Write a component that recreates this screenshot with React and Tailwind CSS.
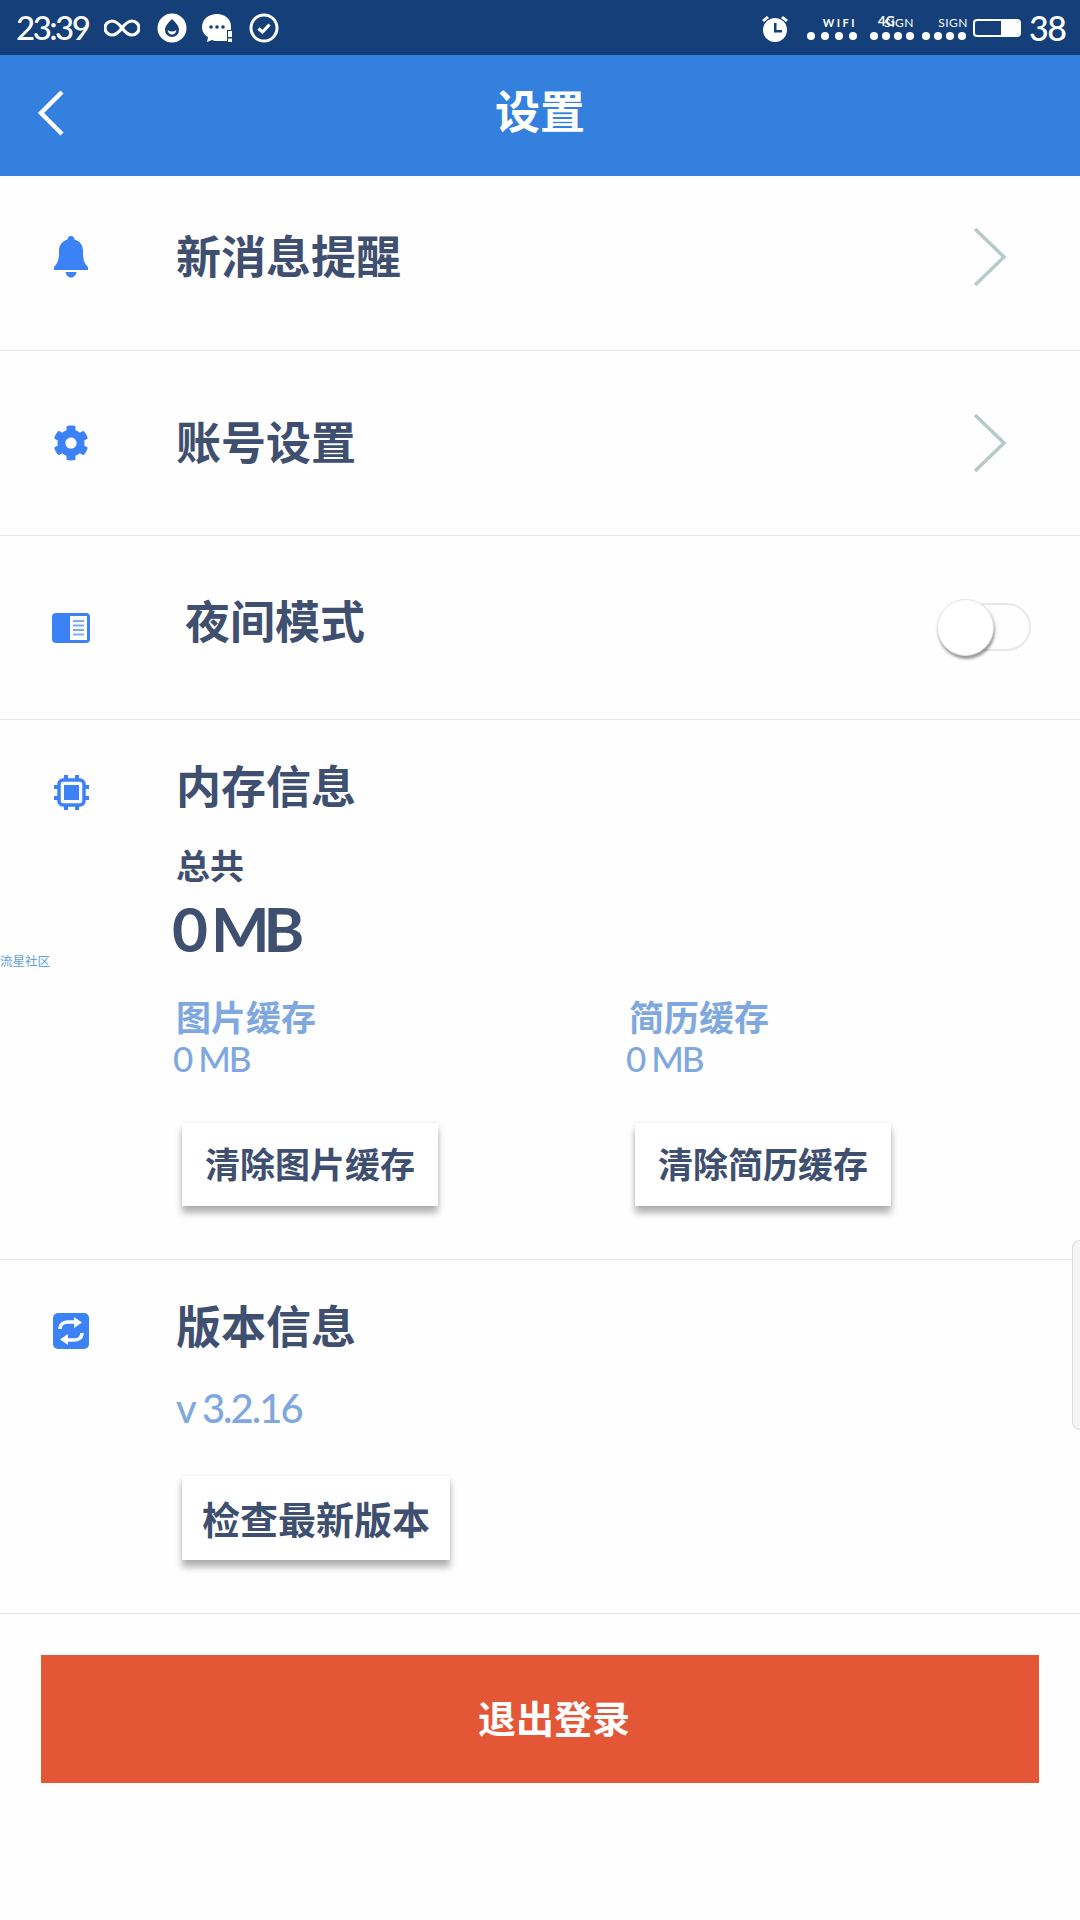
import { FaCog } from 'react-icons/fa';

const CJK = 'font-["Noto_Sans_CJK_SC",sans-serif]';
const LATIN = 'font-["Lato","Noto_Sans_CJK_SC",sans-serif]';

function Dots({ gap }) {
  return (
    <div className={`flex ${gap}`}>
      {[0, 1, 2, 3].map((i) => (
        <span key={i} className="size-2 rounded-full bg-white" />
      ))}
    </div>
  );
}

function StatusBar() {
  return (
    <div className={`flex h-[55px] items-center justify-between bg-[#143f78] pl-4 pr-[18px] text-white ${LATIN}`}>
      <div className="flex items-center">
        <span className="w-[88px] text-[33px] font-medium leading-none tracking-[-2.5px]">23:39</span>
        <svg width="36" height="20" viewBox="0 0 36 20" fill="none" stroke="white" strokeWidth="3.2">
          <path d="M18 10c-3-4-6-7-10-7a7 7 0 0 0 0 14c4 0 7-3 10-7s6-7 10-7a7 7 0 0 1 0 14c-4 0-7-3-10-7z" />
        </svg>
        <svg className="ml-[17px]" width="30" height="30" viewBox="0 0 30 30">
          <circle cx="15" cy="15" r="14.5" fill="white" />
          <path d="M15 6c4 4 7 7 7 11a7 7 0 0 1-14 0c0-4 3-7 7-11z" fill="#143f78" />
          <path d="M10.500 17c3 2 6 2 9 0-.5 3-2.500 4.500-4.500 4.500s-4-1.500-4.500-4.500z" fill="white" />
        </svg>
        <svg className="ml-[15px]" width="31" height="30" viewBox="0 0 31 30">
          <path d="M15 1c8 0 14 5 14 12v4h-4v11h-9c-2 0-4 0-6-1l-5 2 1-5c-4-2-6-6-6-10C0 6 7 1 15 1z" fill="white" />
          <circle cx="9" cy="14" r="1.800" fill="#143f78" />
          <circle cx="15" cy="14" r="1.800" fill="#143f78" />
          <circle cx="21" cy="14" r="1.800" fill="#143f78" />
          <path d="M26 18h4v6h-4zM26 25.500h4V29h-4z" fill="white" />
        </svg>
        <svg className="ml-[16px]" width="30" height="30" viewBox="0 0 30 30" fill="none" stroke="white">
          <circle cx="15" cy="15" r="13" strokeWidth="3" />
          <path d="M9.500 15.500l4 3.500 7-7.500" strokeWidth="3.200" />
        </svg>
      </div>
      <div className="flex items-center">
        <svg width="28" height="28" viewBox="0 0 28 28" fill="white">
          <circle cx="14" cy="16" r="12" />
          <path d="M1 6l5-4 2 2-5 4zM27 6l-5-4-2 2 5 4z" />
          <path d="M13 9h2.500v7H21v2.500h-8z" fill="#143f78" />
        </svg>
        <div className="ml-[18px] flex w-[50px] flex-col items-end">
          <span className="mb-[3px] text-[11px] font-bold leading-[13px] tracking-[2.5px]">WIFI</span>
          <Dots gap="gap-[6px]" />
        </div>
        <div className="relative ml-[13px] flex w-[44px] flex-col items-end">
          <span className="mb-[2px] text-[12px] leading-[14px] tracking-[0.5px]">SIGN</span>
          <span className="absolute left-2 top-[-2px] text-[13px] font-bold leading-[14px]">4G</span>
          <Dots gap="gap-[4px]" />
        </div>
        <div className="ml-[8px] flex w-[44px] flex-col items-end">
          <span className="mb-[2px] mr-[-2px] text-[12px] leading-[14px] tracking-[0.5px]">SIGN</span>
          <Dots gap="gap-[4px]" />
        </div>
        <div className="ml-[7px] flex h-[18px] w-[48px] justify-end overflow-hidden rounded-[4px] border-2 border-white">
          <div className="h-full w-[18px] bg-white" />
        </div>
        <span className="ml-2 w-[33px] text-[34px] font-medium leading-none tracking-[-1.5px]">38</span>
      </div>
    </div>
  );
}

function Header() {
  return (
    <div className={`grid h-[121px] grid-cols-[1fr_auto_1fr] items-center bg-[#3480de] text-white ${CJK}`}>
      <svg className="ml-[37px] mt-[-6px]" width="27" height="46" viewBox="0 0 27 46" fill="none" stroke="white" strokeWidth="4.500">
        <path d="M25 2L4 23l21 21" />
      </svg>
      <h1 className="mt-[-12px] text-[45px] font-bold leading-none">设置</h1>
      <span />
    </div>
  );
}

function BellIcon() {
  return (
    <svg width="34" height="42" viewBox="0 0 34 42" fill="#3b82f6">
      <path d="M17 0c2 0 3.500 1.500 3.500 3.500C26 5 29 9.500 29 15c0 6 0 11 5 16v3H0v-3c5-5 5-10 5-16C5 9.500 8 5 13.500 3.500 13.500 1.500 15 0 17 0z" />
      <path d="M11.500 36h11c-.5 3.500-3 5.500-5.500 5.500s-5-2-5.500-5.500z" />
    </svg>
  );
}

function BookIcon() {
  return (
    <svg width="38" height="30" viewBox="0 0 38 30">
      <rect width="38" height="30" rx="4" fill="#3b82f6" />
      <rect x="18" y="3" width="17" height="24" fill="white" />
      <path d="M21 8h11M21 12.500h11M21 17h11M21 21.500h11" stroke="#7fa9f5" strokeWidth="2" />
    </svg>
  );
}

function ChipIcon() {
  return (
    <svg width="35" height="35" viewBox="0 0 35 35" fill="none" stroke="#3b82f6">
      <rect x="5" y="5" width="25" height="25" rx="4" strokeWidth="3.500" />
      <rect x="10" y="10" width="15" height="15" fill="#3b82f6" strokeWidth="0" />
      <path d="M12 0v4M23 0v4M12 31v4M23 31v4M0 12h4M0 23h4M31 12h4M31 23h4" strokeWidth="4" />
    </svg>
  );
}

function SyncIcon() {
  return (
    <svg width="36" height="36" viewBox="0 0 36 36">
      <rect width="36" height="36" rx="5" fill="#3b82f6" />
      <path d="M7 16c0-5 4-7 8-7h7" fill="none" stroke="white" strokeWidth="3.500" />
      <path d="M21 4l8 5.500-8 5.500z" fill="white" />
      <path d="M29 20c0 5-4 7-8 7h-7" fill="none" stroke="white" strokeWidth="3.500" />
      <path d="M15 21l-8 5.500 8 5.500z" fill="white" />
    </svg>
  );
}

function Chevron() {
  return (
    <svg width="34" height="60" viewBox="0 0 34 60" fill="none" stroke="#b5cbc8" strokeWidth="3.500">
      <path d="M2 2l29 28L2 58" />
    </svg>
  );
}

function ShadowButton({ children, className }) {
  return (
    <button className={`flex items-center justify-center bg-white pb-[2px] font-bold text-[#3f4f6f] shadow-[0_7px_7px_rgba(0,0,0,0.3),0_0_4px_rgba(0,0,0,0.08)] ${className}`}>
      {children}
    </button>
  );
}

function NavRow({ icon, title, className }) {
  return (
    <div className={`flex items-center justify-between border-b border-[#e8e8e8] pr-[73px] ${className}`}>
      <div className="flex items-center">
        <div className="flex w-[176px] justify-center pr-[34px]">{icon}</div>
        <span className="mb-[6px] text-[45px] font-bold leading-none text-[#3f4f6f]">{title}</span>
      </div>
      <Chevron />
    </div>
  );
}

function CacheColumn({ label, buttonText }) {
  return (
    <div>
      <div className="text-[35px] font-bold leading-[35px] text-[#7fa8e0]">{label}</div>
      <div className={`ml-[-3px] mt-[8px] text-[35px] font-medium leading-[35px] tracking-[-2px] text-[#7fa8e0] ${LATIN}`}>0 MB</div>
      <ShadowButton className="ml-[6px] mt-[47px] h-[83px] w-[256px] text-[35px]">{buttonText}</ShadowButton>
    </div>
  );
}

export default function App() {
  return (
    <div className={`relative h-[1920px] w-[1080px] overflow-hidden bg-[#fefefe] ${CJK}`}>
      <StatusBar />
      <Header />

      <NavRow icon={<BellIcon />} title="新消息提醒" className="h-[175px] pb-3" />
      <NavRow icon={<FaCog size={36} color="#3b82f6" />} title="账号设置" className="h-[185px]" />

      <div className="flex h-[184px] items-center justify-between border-b border-[#e8e8e8] pr-[49px]">
        <div className="flex items-center">
          <div className="flex w-[176px] justify-center pr-[34px]"><BookIcon /></div>
          <span className="mb-[16px] ml-[9px] text-[45px] font-bold leading-none text-[#3f4f6f]">夜间模式</span>
        </div>
        <div className="relative mb-[2px] h-[48px] w-[92px] rounded-full border-2 border-[#e8e8e8]">
          <div className="absolute -left-[4px] -top-[6px] size-[57px] rounded-full border border-[#e2e2e2] bg-white shadow-[1px_3px_3px_rgba(0,0,0,0.4)]" />
        </div>
      </div>

      {/* 内存信息 */}
      <div className="flex h-[540px] border-b border-[#e8e8e8]">
        <div className="flex w-[176px] justify-center pr-[34px] pt-[55px]"><ChipIcon /></div>
        <div className="pt-[42px]">
          <div className="text-[45px] font-bold leading-none text-[#3f4f6f]">内存信息</div>
          <div className="mt-[41px] text-[34px] font-bold leading-none text-[#3f4f6f]">总共</div>
          <div className={`ml-[-4px] mt-[15px] text-[62px] font-bold leading-none tracking-[-6px] text-[#3f4f6f] ${LATIN}`}>0 MB</div>
          <div className="mt-[39px] grid grid-cols-[453px_1fr]">
            <CacheColumn label="图片缓存" buttonText="清除图片缓存" />
            <CacheColumn label="简历缓存" buttonText="清除简历缓存" />
          </div>
        </div>
      </div>

      {/* 版本信息 */}
      <div className="flex h-[354px] border-b border-[#e8e8e8]">
        <div className="flex w-[176px] justify-center pr-[34px] pt-[53px]"><SyncIcon /></div>
        <div className="pt-[42px]">
          <div className="text-[45px] font-bold leading-none text-[#3f4f6f]">版本信息</div>
          <div className={`mt-[41px] text-[40px] font-medium leading-none tracking-[-2px] text-[#7fa8e0] ${LATIN}`}>v 3.2.16</div>
          <ShadowButton className="ml-[6px] mt-[48px] h-[84px] w-[268px] text-[38px]">检查最新版本</ShadowButton>
        </div>
      </div>

      <button className="ml-[41px] mt-[41px] flex h-[128px] w-[998px] items-center justify-center bg-[#e45736] pb-[6px] pl-[28px] text-[38px] font-bold text-white">
        退出登录
      </button>

      {/* 悬浮层 */}
      <span className="absolute left-0 top-[954px] text-[12.5px] leading-[14px] text-[#5f9ee0]">流星社区</span>
      <div className="absolute right-0 top-[1240px] h-[190px] w-2 rounded-l-lg border border-r-0 border-[#dcdcdc] bg-[#f6f6f6]" />
    </div>
  );
}
